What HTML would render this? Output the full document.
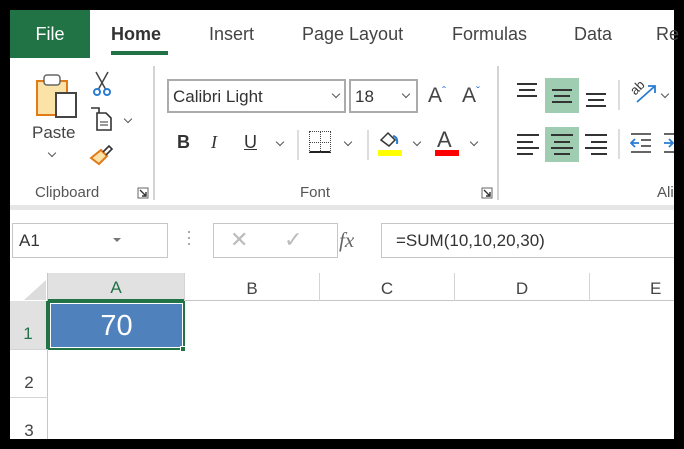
<!DOCTYPE html>
<html><head><meta charset="utf-8"><style>
*{margin:0;padding:0;box-sizing:border-box}
html,body{width:684px;height:449px;overflow:hidden}
body{background:#000;position:relative;font-family:"Liberation Sans",sans-serif;color:#444}
.a{position:absolute}
.t{font-size:18px;color:#444;top:24px}
.chev{position:absolute;width:6px;height:6px;border-right:1.5px solid #555;border-bottom:1.5px solid #555;transform:rotate(45deg)}
.ln{position:absolute;height:1.6px;background:#333}
</style></head><body>
<div class="a" style="left:10px;top:10px;width:664px;height:429px;background:#fff"></div>
<div class="a" style="left:10px;top:10px;width:80px;height:48px;background:#217346;color:#fff;font-size:18px;text-align:center;line-height:48px">File</div>
<div class="a t" style="left:111px;color:#333;font-weight:bold">Home</div>
<div class="a" style="left:111px;top:51px;width:57px;height:4px;background:#217346"></div>
<div class="a t" style="left:209px">Insert</div>
<div class="a t" style="left:302px">Page Layout</div>
<div class="a t" style="left:452px">Formulas</div>
<div class="a t" style="left:574px">Data</div>
<div class="a t" style="left:656px">Re</div>
<div class="a" style="left:10px;top:205px;width:664px;height:5px;background:#e6e6e6"></div>
<div class="a" style="left:153px;top:66px;width:2px;height:134px;background:#d4d4d4"></div>
<div class="a" style="left:497px;top:66px;width:2px;height:134px;background:#d4d4d4"></div>
<svg class="a" style="left:34px;top:72px" width="46" height="46"><rect x="3" y="9" width="30" height="34" fill="#fbe2a6" stroke="#e07b18" stroke-width="2"/><rect x="10" y="3" width="16" height="10" rx="3" fill="#fff" stroke="#666" stroke-width="1.5"/><rect x="22" y="21" width="20" height="24" fill="#fff" stroke="#444" stroke-width="2"/></svg>
<div class="a" style="left:32px;top:123px;font-size:17px">Paste</div>
<div class="chev" style="left:49px;top:150px"></div>
<svg class="a" style="left:92px;top:70px" width="20" height="28"><path d="M4 2L14 20M16 2L6 20" stroke="#444" stroke-width="1.5" fill="none"/><circle cx="5" cy="22" r="3" fill="none" stroke="#2b7cd3" stroke-width="2"/><circle cx="15" cy="22" r="3" fill="none" stroke="#2b7cd3" stroke-width="2"/></svg>
<svg class="a" style="left:89px;top:106px" width="26" height="26"><path d="M2 2h8v20h10" fill="none" stroke="#333" stroke-width="1.6"/><path d="M8 7h9l5 5v12H8z" fill="#fff" stroke="#333" stroke-width="1.6"/><path d="M11 16h8M11 19h8" stroke="#333"/></svg>
<div class="chev" style="left:125px;top:116px"></div>
<svg class="a" style="left:89px;top:140px" width="26" height="26"><path d="M2 18l10-8 6 6-8 8z" fill="#fbe2a6" stroke="#e07b18" stroke-width="2"/><path d="M14 12l6-6 3 3-6 6" fill="none" stroke="#333" stroke-width="1.6"/></svg>
<div class="a" style="left:35px;top:184px;font-size:15px;color:#555">Clipboard</div>
<svg class="a" style="left:137px;top:187px" width="12" height="12"><path d="M1 1h10v10H1z" fill="none" stroke="#666"/><path d="M3 3l6 6M9 5v4H5" fill="none" stroke="#333" stroke-width="1.4"/></svg>
<div class="a" style="left:167px;top:79px;width:179px;height:34px;border:2px solid #ababab;font-size:17px;color:#333;padding:6px 4px">Calibri Light</div>
<div class="chev" style="left:333px;top:91px"></div>
<div class="a" style="left:349px;top:79px;width:69px;height:34px;border:2px solid #ababab;font-size:17px;color:#333;padding:6px 4px">18</div>
<div class="chev" style="left:403px;top:91px"></div>
<div class="a" style="left:428px;top:84px;font-size:21px;color:#444">A<span style="font-size:12px;color:#2b7cd3;vertical-align:top">ˆ</span></div>
<div class="a" style="left:462px;top:84px;font-size:21px;color:#444">A<span style="font-size:12px;color:#2b7cd3;vertical-align:top">ˇ</span></div>
<div class="a" style="left:177px;top:132px;font-size:18px;font-weight:bold;color:#333">B</div>
<div class="a" style="left:211px;top:132px;font-size:18px;font-style:italic;font-family:'Liberation Serif',serif;color:#333">I</div>
<div class="a" style="left:244px;top:132px;font-size:18px;text-decoration:underline;color:#333">U</div>
<div class="chev" style="left:277px;top:139px"></div>
<div class="a" style="left:297px;top:130px;width:2px;height:30px;background:#ddd"></div>
<div class="a" style="left:309px;top:131px;width:22px;height:22px;border:1px dotted #444;border-bottom:2px solid #222"></div>
<div class="a" style="left:320px;top:131px;width:0;height:22px;border-left:1px dotted #444"></div>
<div class="a" style="left:309px;top:142px;width:22px;height:0;border-top:1px dotted #444"></div>
<div class="chev" style="left:345px;top:139px"></div>
<div class="a" style="left:367px;top:130px;width:2px;height:30px;background:#ddd"></div>
<svg class="a" style="left:378px;top:130px" width="24" height="20"><path d="M3 10l7-7 7 7-6 6z" fill="#fff" stroke="#333" stroke-width="1.5"/><path d="M15 6q5 1 4 8" fill="none" stroke="#2b7cd3" stroke-width="2"/></svg>
<div class="a" style="left:378px;top:150px;width:24px;height:6px;background:#ffff00"></div>
<div class="chev" style="left:414px;top:139px"></div>
<div class="a" style="left:437px;top:127px;font-size:22px;color:#444">A</div>
<div class="a" style="left:435px;top:150px;width:24px;height:6px;background:#f00"></div>
<div class="chev" style="left:471px;top:139px"></div>
<div class="a" style="left:300px;top:184px;font-size:15px;color:#555">Font</div>
<svg class="a" style="left:481px;top:187px" width="12" height="12"><path d="M1 1h10v10H1z" fill="none" stroke="#666"/><path d="M3 3l6 6M9 5v4H5" fill="none" stroke="#333" stroke-width="1.4"/></svg>
<div class="ln" style="left:517px;top:83px;width:20px"></div><div class="ln" style="left:519px;top:89px;width:16px"></div><div class="ln" style="left:517px;top:95px;width:20px"></div>
<div class="a" style="left:545px;top:78px;width:34px;height:35px;background:#9fcdb2"></div>
<div class="ln" style="left:552px;top:89px;width:20px"></div><div class="ln" style="left:554px;top:95px;width:16px"></div><div class="ln" style="left:552px;top:101px;width:20px"></div>
<div class="ln" style="left:586px;top:93px;width:20px"></div><div class="ln" style="left:588px;top:99px;width:16px"></div><div class="ln" style="left:586px;top:105px;width:20px"></div>
<div class="a" style="left:618px;top:80px;width:2px;height:30px;background:#ddd"></div>
<div class="a" style="left:630px;top:80px;font-size:13px;transform:rotate(-45deg);color:#333">ab</div>
<svg class="a" style="left:633px;top:80px" width="26" height="26"><path d="M4 22L22 6M15 6h7v7" fill="none" stroke="#2b7cd3" stroke-width="1.8"/></svg>
<div class="chev" style="left:662px;top:91px"></div>
<div class="ln" style="left:517px;top:134px;width:22px"></div><div class="ln" style="left:517px;top:141px;width:16px"></div><div class="ln" style="left:517px;top:147px;width:22px"></div><div class="ln" style="left:517px;top:153px;width:16px"></div>
<div class="a" style="left:545px;top:127px;width:34px;height:35px;background:#9fcdb2"></div>
<div class="ln" style="left:551px;top:134px;width:22px"></div><div class="ln" style="left:554px;top:141px;width:16px"></div><div class="ln" style="left:551px;top:147px;width:22px"></div><div class="ln" style="left:554px;top:153px;width:16px"></div>
<div class="ln" style="left:585px;top:134px;width:22px"></div><div class="ln" style="left:591px;top:141px;width:16px"></div><div class="ln" style="left:585px;top:147px;width:22px"></div><div class="ln" style="left:591px;top:153px;width:16px"></div>
<div class="a" style="left:618px;top:129px;width:2px;height:30px;background:#ddd"></div>
<svg class="a" style="left:629px;top:131px" width="24" height="24"><path d="M2 3h20M12 9h10M12 15h10M2 21h20" stroke="#333" stroke-width="1.6"/><path d="M10 12H2M6 8l-4 4 4 4" fill="none" stroke="#2b7cd3" stroke-width="1.8"/></svg>
<svg class="a" style="left:664px;top:131px" width="10" height="24"><path d="M0 12h8M5 8l4 4-4 4" fill="none" stroke="#2b7cd3" stroke-width="1.8"/><path d="M0 3h10M0 21h10" stroke="#333" stroke-width="1.6"/></svg>
<div class="a" style="left:657px;top:184px;font-size:15px;color:#555">Ali</div>
<div class="a" style="left:10px;top:210px;width:664px;height:55px;background:#fff"></div>
<div class="a" style="left:12px;top:223px;width:156px;height:35px;border:1px solid #c6c6c6;font-size:17px;color:#333;padding:7px 6px">A1</div>
<div class="a" style="left:113px;top:238px;width:0;height:0;border:4px solid transparent;border-top:4px solid #777"></div>
<div class="a" style="left:188px;top:231px;width:2px;height:2px;background:#aaa;box-shadow:0 6px #aaa,0 12px #aaa"></div>
<div class="a" style="left:213px;top:223px;width:125px;height:35px;border:1px solid #c6c6c6"></div>
<div class="a" style="left:230px;top:227px;font-size:22px;color:#bbb">✕</div>
<div class="a" style="left:284px;top:227px;font-size:22px;color:#bbb">✓</div>
<div class="a" style="left:339px;top:228px;font-size:21px;font-style:italic;font-family:'Liberation Serif',serif;color:#666">fx</div>
<div class="a" style="left:381px;top:223px;width:293px;height:35px;border:1px solid #c6c6c6;border-right:none;font-size:17px;color:#333;padding:7px 14px">=SUM(10,10,20,30)</div>
<div class="a" style="left:10px;top:273px;width:664px;height:28px;background:#fff;border-bottom:1px solid #c6c6c6"></div>
<div class="a" style="left:10px;top:273px;width:38px;height:166px;background:#fff;border-right:1px solid #c6c6c6"></div>
<svg class="a" style="left:20px;top:280px" width="26" height="20"><path d="M26 0V20H4z" fill="#dcdcdc"/></svg>
<div class="a" style="left:48px;top:273px;width:136px;height:28px;background:#e1e1e1;border-bottom:2px solid #217346;color:#217346;font-size:17px;text-align:center;line-height:30px">A</div>
<div class="a" style="left:184px;top:273px;width:135px;height:28px;border-left:1px solid #d4d4d4;font-size:17px;text-align:center;line-height:32px;color:#444">B</div>
<div class="a" style="left:319px;top:273px;width:135px;height:28px;border-left:1px solid #d4d4d4;font-size:17px;text-align:center;line-height:32px;color:#444">C</div>
<div class="a" style="left:454px;top:273px;width:135px;height:28px;border-left:1px solid #d4d4d4;font-size:17px;text-align:center;line-height:32px;color:#444">D</div>
<div class="a" style="left:589px;top:273px;width:85px;height:28px;border-left:1px solid #d4d4d4;font-size:17px;padding-left:60px;line-height:32px;color:#444">E</div>
<div class="a" style="left:10px;top:301px;width:38px;height:48px;background:#e1e1e1;border-right:2px solid #217346;color:#217346;font-size:17px;text-align:center;line-height:66px">1</div>
<div class="a" style="left:10px;top:349px;width:38px;height:48px;border-top:1px solid #d4d4d4;font-size:17px;text-align:center;line-height:66px;color:#444">2</div>
<div class="a" style="left:10px;top:397px;width:38px;height:42px;border-top:1px solid #d4d4d4;font-size:17px;text-align:center;line-height:66px;color:#444;overflow:hidden">3</div>
<div class="a" style="left:48px;top:301px;width:137px;height:49px;border:2px solid #217346;background:#4f81bd;box-shadow:inset 0 0 0 1px #fff;color:#fff;font-size:29px;text-align:center;line-height:46px">70</div>
<div class="a" style="left:180px;top:346px;width:6px;height:6px;background:#217346;border:1px solid #fff"></div>
</body></html>
